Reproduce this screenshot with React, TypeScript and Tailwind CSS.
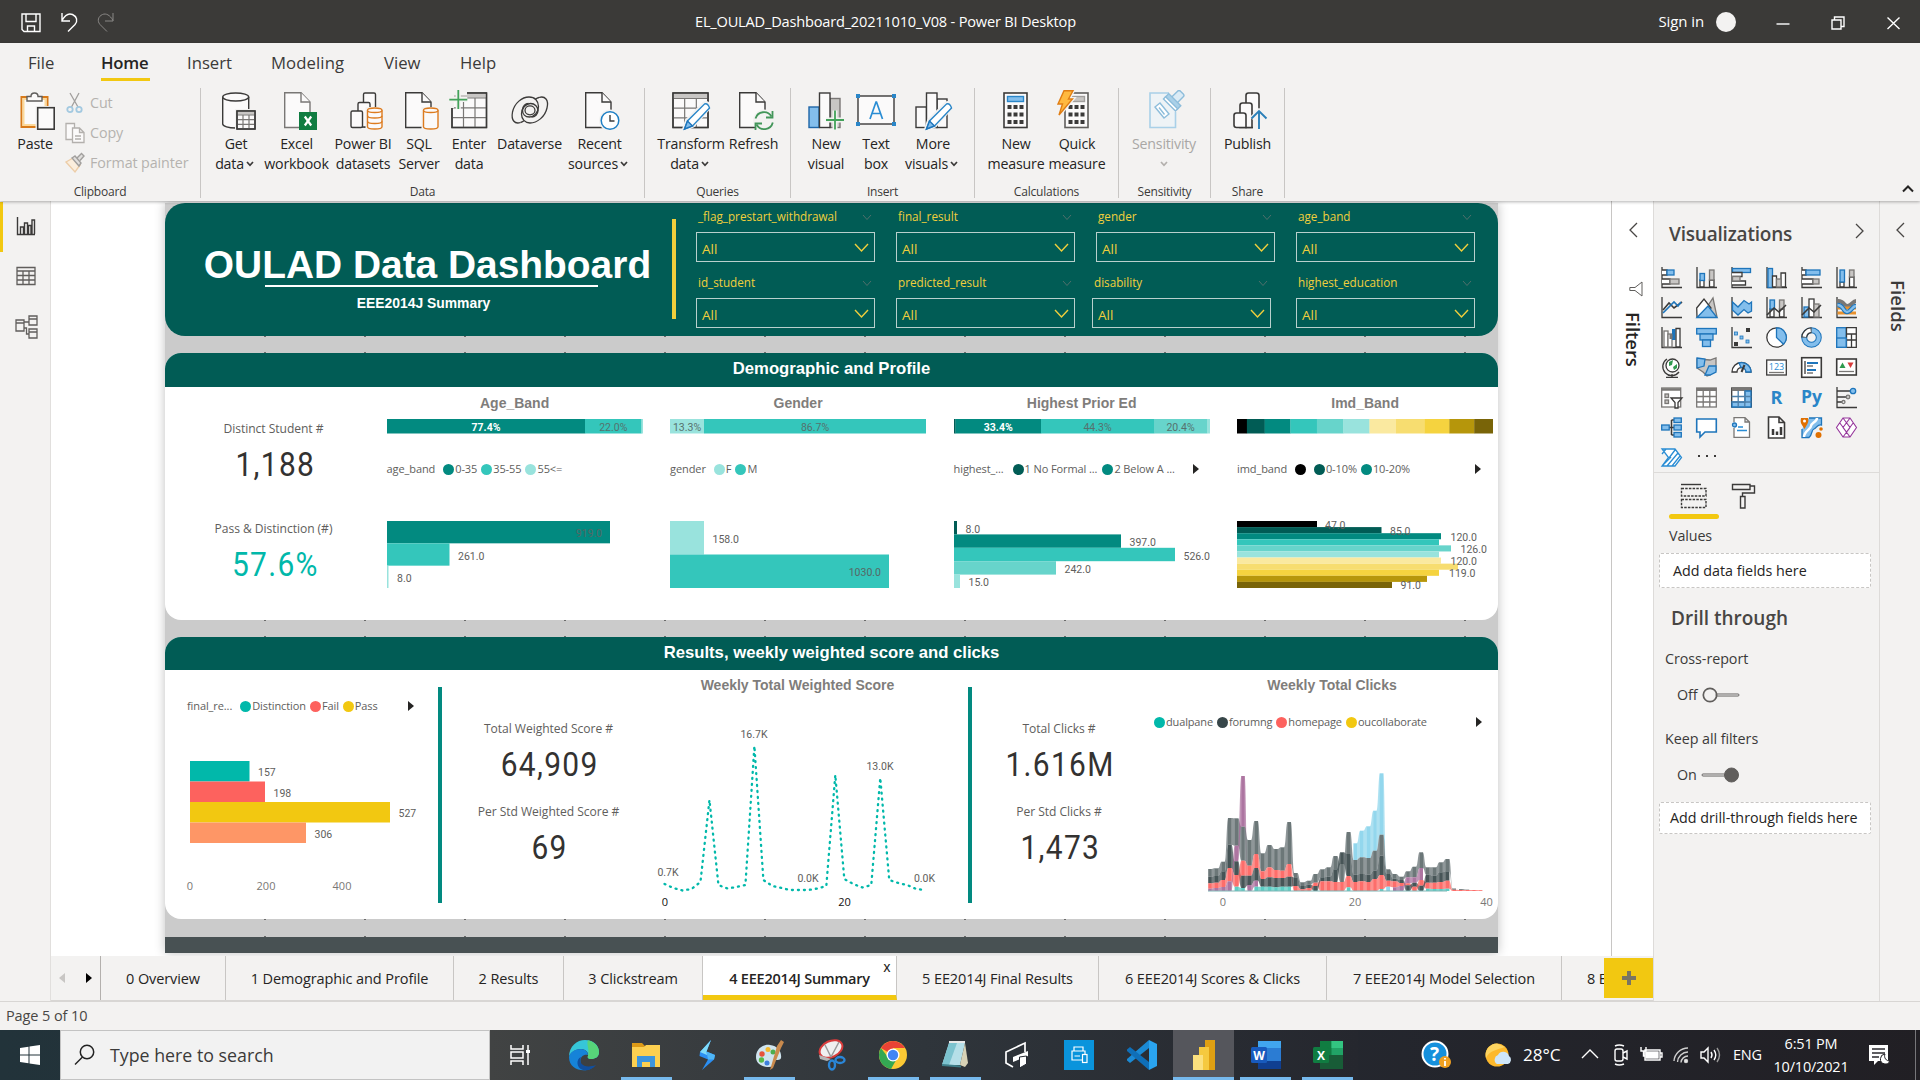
import React from "react";

const DARK = "#3b3a39";
const PAPER = "#fbfafa";

/* ---------- ribbon icons (40 x 42 box) ---------- */

function Icon({ children, w = 40, h = 42 }: { children: React.ReactNode; w?: number; h?: number }) {
  return (
    <svg width={w} height={h} viewBox={`0 0 ${w} ${h}`} fill="none" strokeWidth="1.4" className="block shrink-0">
      {children}
    </svg>
  );
}

function Doc({ x = 6, stroke = DARK }: { x?: number; stroke?: string }) {
  return (
    <g transform={`translate(${x} 0)`} stroke={stroke} fill={PAPER}>
      <path d="M.7 2.7H17L26 12V37.5H.7Z" />
      <path d="M17 2.7V12H26" />
    </g>
  );
}

function Cyl({ x, y, w, h, color, fill = PAPER, rings = 0 }: { x: number; y: number; w: number; h: number; color: string; fill?: string; rings?: number }) {
  const r = w / 2;
  const ry = w / 6.5;
  return (
    <g stroke={color} fill={fill}>
      <path d={`M${x} ${y + ry}v${h - 2 * ry}a${r} ${ry} 0 0 0 ${w} 0v${-(h - 2 * ry)}`} />
      <ellipse cx={x + r} cy={y + ry} rx={r} ry={ry} />
      {Array.from({ length: rings }, (_, i) => (
        <path key={i} fill="none" d={`M${x} ${y + ry + ((i + 1) * (h - 2 * ry)) / (rings + 1)}a${r} ${ry} 0 0 0 ${w} 0`} />
      ))}
    </g>
  );
}

function GridTable({ x, y, w, h, head = 6 }: { x: number; y: number; w: number; h: number; head?: number }) {
  const bh = h - head;
  return (
    <g>
      <rect x={x} y={y} width={w} height={h} fill={PAPER} stroke={DARK} />
      <rect x={x + 0.7} y={y + 0.7} width={w - 1.4} height={head - 1} fill="#c8c6c4" />
      <path
        stroke="#797775"
        strokeWidth="1.2"
        d={`M${x} ${y + head}h${w}M${x} ${y + head + bh / 3}h${w}M${x} ${y + head + (2 * bh) / 3}h${w}M${x + w / 3} ${y + head}v${bh}M${x + (2 * w) / 3} ${y + head}v${bh}`}
      />
      <rect x={x} y={y} width={w} height={h} stroke={DARK} />
    </g>
  );
}

function Pencil() {
  return (
    <g>
      <path d="M14 39.5L17 30.5L34 13.5Q37.500 11.500 40 16.500L23 35.5Z" fill="#fff" stroke="#f3f2f1" strokeWidth="4" />
      <path d="M14.500 39L17.500 31L34.500 14Q38 13 39.500 18L22.500 36Z" fill="#fff" stroke="#2a86c8" />
      <path d="M14.500 39L17.500 31L22.500 36Z" fill="#83beec" stroke="#1e75bb" />
    </g>
  );
}

function Plus({ x, y }: { x: number; y: number }) {
  return (
    <g>
      <path d={`M${x - 9} ${y}h18M${x} ${y - 9.5}v19`} stroke="#f3f2f1" strokeWidth="5" />
      <path d={`M${x - 9} ${y}h18M${x} ${y - 9.5}v19`} stroke="#43a25a" strokeWidth="1.8" />
    </g>
  );
}

function Keys({ x }: { x: number }) {
  return (
    <g fill={DARK}>
      {[15, 22.5, 30].map((yy) => [0, 6, 12].map((xx) => <rect key={`${xx}-${yy}`} x={x + xx} y={yy} width="4" height="4" />))}
    </g>
  );
}

const ICONS: Record<string, React.ReactNode> = {
  paste: (
    <Icon>
      <rect x="2.500" y="7" width="26" height="30" fill="#fff" stroke="#d87a1a" strokeWidth="2" />
      <rect x="4.500" y="9" width="22" height="26" fill={PAPER} stroke="#fcd99a" strokeWidth="2" />
      <path d="M8 11V6.500H12Q12 3 15.500 3T19 6.500H23V11Z" fill={PAPER} stroke="#605e5c" />
      <rect x="16.500" y="16" width="20" height="24" fill="#f3f2f1" />
      <rect x="18.700" y="17.700" width="16.500" height="21.500" fill={PAPER} stroke={DARK} strokeWidth="1.600" />
    </Icon>
  ),
  getdata: (
    <Icon>
      <Cyl x={6.7} y={3} w={26} h={35} color={DARK} />
      <rect x="19" y="19" width="22" height="22" fill="#f3f2f1" />
      <GridTable x={21} y={21} w={18} h={18} head={4} />
    </Icon>
  ),
  excel: (
    <Icon w={42}>
      <Doc x={8} stroke="#797775" />
      <rect x="23" y="22" width="18" height="18" fill="#107c41" />
      <path d="M28.800 26.500L35.200 35.500M35.200 26.500L28.800 35.500" stroke="#fff" strokeWidth="2.200" />
    </Icon>
  ),
  pbi: (
    <Icon>
      <g stroke={DARK} fill={PAPER}>
        <rect x="20.500" y="3" width="12" height="34" rx="1.500" />
        <path d="M27 37V14Q27 12.500 25.500 12.500H16.500Q15 12.500 15 14V37Z" />
        <rect x="8" y="21" width="11.500" height="16.500" rx="1.500" />
      </g>
      <path d="M22.500 17H42V41H22.500Z" fill="#f3f2f1" />
      <Cyl x={24.5} y={18} w={14.5} h={21} color="#dd7b1e" rings={2} />
    </Icon>
  ),
  sql: (
    <Icon>
      <Doc />
      <path d="M22.500 17H42V41H22.500Z" fill="#f3f2f1" />
      <Cyl x={24.5} y={18} w={14.5} h={21} color="#dd7b1e" />
    </Icon>
  ),
  enter: (
    <Icon>
      <GridTable x={3} y={3} w={34.5} h={34.5} head={5} />
      <path d="M0 0H18V5H0ZM0 0H5V18H0Z" fill="#f3f2f1" />
      <Plus x={9.3} y={9.6} />
    </Icon>
  ),
  dataverse: (
    <Icon>
      <g stroke={DARK} strokeWidth="1.300">
        <path d="M29 7.500C35 5.500 39 10 37 18C35 27 27 33 20 33C15 33 11.500 29 11.500 24C11.500 18 16 13.500 20.500 13.500C25 13.500 28 17 28 20.500C28 24.500 25 27 21.500 27" />
        <path d="M10.500 32.500C4.500 34.500 1 30 2.500 22C4.500 13 12 7 19 7C25 7 28.500 11 28.500 16.500C28.500 22.500 24 27 19.500 27C15 27 12.500 24 12.500 20C12.500 16 15.500 13.500 18.500 13.500" />
        <path d="M29 7.500C27 8 26.500 8.500 25.500 9.300M10.500 32.500C12 32.200 13 31.500 14 30.800" />
        <ellipse cx="20" cy="20.300" rx="5" ry="4.500" />
      </g>
    </Icon>
  ),
  recent: (
    <Icon>
      <Doc x={5} />
      <circle cx="30" cy="30.500" r="11" fill="#f3f2f1" />
      <circle cx="30" cy="30.500" r="8.800" fill="#fff" stroke="#1e7fc4" strokeWidth="1.500" />
      <path d="M30 25V31H34.500" stroke={DARK} />
    </Icon>
  ),
  transform: (
    <Icon w={42}>
      <GridTable x={3} y={3} w={35} h={34.5} head={5.5} />
      <Pencil />
    </Icon>
  ),
  refresh: (
    <Icon w={42}>
      <Doc />
      <circle cx="31" cy="30.500" r="11" fill="#f3f2f1" />
      <g stroke="#43965a" strokeWidth="1.800">
        <path d="M22.500 28.500A8.800 8.800 0 0 1 38.500 26.500M39.800 32.500A8.800 8.800 0 0 1 23.500 34.500" />
        <path d="M39.500 21V27.500H33M22.500 40V33.500H29" />
      </g>
    </Icon>
  ),
  newvisual: (
    <Icon w={42}>
      <rect x="4" y="17" width="10" height="20.500" fill="#83beec" stroke="#1e66a8" />
      <rect x="25" y="8.500" width="10" height="29" fill="#c8c6c4" stroke="#797775" />
      <rect x="14.500" y="3" width="10.500" height="34.500" fill={PAPER} stroke={DARK} />
      <Plus x={30} y={30} />
    </Icon>
  ),
  textbox: (
    <Icon>
      <rect x="2" y="6" width="36" height="28" fill={PAPER} stroke={DARK} />
      <path d="M14 29L20 12H20.500L26.500 29M16 23.500H24.500" stroke="#2a8dd4" strokeWidth="1.700" />
      <g fill="#2a86c8">
        <rect x="0" y="4" width="4" height="4" />
        <rect x="36" y="4" width="4" height="4" />
        <rect x="0" y="32" width="4" height="4" />
        <rect x="36" y="32" width="4" height="4" />
      </g>
    </Icon>
  ),
  more: (
    <Icon w={42}>
      <g stroke={DARK} fill={PAPER}>
        <rect x="4" y="17" width="10.500" height="20.500" />
        <rect x="25" y="9" width="10" height="28.500" />
        <rect x="14.500" y="3" width="10.500" height="34.500" />
      </g>
      <Pencil />
    </Icon>
  ),
  measure: (
    <Icon>
      <rect x="8" y="3" width="23" height="34.500" fill={PAPER} stroke={DARK} strokeWidth="1.600" />
      <rect x="11.500" y="6.500" width="16" height="5" fill="#83beec" stroke="#2a86c8" />
      <Keys x={11.5} />
    </Icon>
  ),
  quick: (
    <Icon>
      <rect x="8" y="3" width="23" height="34.500" fill={PAPER} stroke="#605e5c" strokeWidth="1.600" />
      <rect x="12.500" y="6.500" width="15" height="5" fill="#c8c6c4" stroke="#a19f9d" />
      <Keys x={11.5} />
      <path d="M7 .5H16L11.500 9H15.500L2 25L5.500 14H1Z" fill="#ffc95c" stroke="#f3f2f1" strokeWidth="4" />
      <path d="M7 .8H16L11.500 9H15.500L2 25L5.500 14H1Z" fill="#ffb940" stroke="#e07d13" />
    </Icon>
  ),
  sensitivity: (
    <Icon w={42}>
      <path d="M26 3H7V37.500H32.500V22" stroke="#a9d0e8" strokeWidth="1.600" fill="#eef3f6" />
      <g transform="rotate(45 24 16) translate(1 -3)" stroke="#8dbddb">
        <rect x="20" y="-1" width="8" height="12" rx="2" fill="#dbebf5" />
        <rect x="15.500" y="9" width="17" height="5" fill="#a9d0e8" />
        <rect x="15.500" y="13.500" width="17" height="3" fill="#fff" />
      </g>
      <path d="M12 17L17 13L26 24L21 28ZM16 17.500L21.500 24.500" stroke="#8dbddb" fill="#fff" />
    </Icon>
  ),
  publish: (
    <Icon w={42}>
      <g stroke={DARK} fill={PAPER} strokeWidth="1.600">
        <path d="M19 37.500V5.500Q19 3 21.500 3H29.500Q32 3 32 5.500V37.500Z" />
        <path d="M13 37.500V15.500Q13 13 15.500 13H22.500Q25 13 25 15.500V37.500Z" />
        <path d="M7 35V25.500Q7 23 9.500 23H16.500Q19 23 19 25.500V37.500H9.500Q7 37.500 7 35Z" />
      </g>
      <path d="M26 20H42V42H26Z" fill="#f3f2f1" />
      <path d="M32 39V21M24.500 28.500L32 21L39.500 28.500" stroke="#f3f2f1" strokeWidth="4.500" />
      <path d="M32 39V21M24.500 28.500L32 21L39.500 28.500" stroke="#2a7fb8" strokeWidth="1.900" />
    </Icon>
  ),
};

function Caret({ color = DARK }: { color?: string }) {
  return (
    <svg width="8" height="6" viewBox="0 0 8 6" fill="none" className="inline-block">
      <path d="M1 1L4 4.300L7 1" stroke={color} strokeWidth="1.700" />
    </svg>
  );
}

function Btn({ icon, a, b, caret, w, dim }: { icon: string; a: string; b?: string; caret?: boolean; w: string; dim?: boolean }) {
  return (
    <div className={`${w} flex shrink-0 flex-col items-center text-[14.200px] leading-5 tracking-[-0.200px] whitespace-nowrap ${dim ? "text-[#a9a7a5]" : "text-[#252423]"}`}>
      {ICONS[icon]}
      <div className="mt-[2px]">{a}</div>
      <div className={`flex h-5 items-center gap-[2px] ${caret && b ? "-ml-[3px]" : ""}`}>
        {b}
        {caret && <Caret color={dim ? "#b3b0ad" : DARK} />}
      </div>
    </div>
  );
}

function Group({ label, w, pad = "", children }: { label: string; w: string; pad?: string; children: React.ReactNode }) {
  return (
    <div className={`${w} flex h-[110px] shrink-0 flex-col justify-between border-r border-[#c8c6c4] pt-[2px]`}>
      <div className={`flex ${pad}`}>{children}</div>
      <div className="h-[13px] text-center text-[12px] leading-[14px] tracking-[-0.200px] text-[#3b3a39]">{label}</div>
    </div>
  );
}

function TitleBar() {
  return (
    <div className="grid h-[43px] grid-cols-[695px_auto_1fr] items-center bg-[#3b3a38] text-[14.600px] tracking-[-0.200px] text-white">
      <svg width="130" height="43" viewBox="0 0 130 43" fill="none" stroke="#fff" strokeWidth="1.400">
        <path d="M22 14H40V31.500H24L22 29.500ZM26 14V21.500H36V14M27.500 31.500V26H34.500V31.500" />
        <path d="M62 13V21H70M62 20.500C65 15 69 13 72.500 14.500C77 16.500 78 21 75 24.500L68 31.500" />
        <path d="M113 13V21H105M113 20.500C110 15 106 13 102.500 14.500C98 16.500 97 21 100 24.500L107 31.500" stroke="#8a8886" strokeWidth="1" />
      </svg>
      <div>EL_OULAD_Dashboard_20211010_V08 - Power BI Desktop</div>
      <div className="flex h-full items-center justify-end">
        <span className="text-[15px] tracking-[-0.100px]">Sign in</span>
        <span className="ml-[12px] size-5 rounded-full bg-[#f3f2f1]" />
        <svg width="184" height="43" viewBox="0 0 184 43" fill="none" stroke="#fff" strokeWidth="1.400">
          <path d="M40.500 24H53.500" />
          <path d="M96 20H105V29H96ZM98.500 20V17H108V26.500H105" />
          <path d="M151.500 17.500L163.500 29M163.500 17.500L151.500 29" />
        </svg>
      </div>
    </div>
  );
}

function Ribbon() {
  return (
    <div className="relative z-10 h-[158px] bg-[#f3f2f1] shadow-[0_1px_3px_rgba(0,0,0,0.300)]">
      <div className="flex h-[45px] text-[16.700px] leading-[40px] text-[#3b3a39]">
        <div className="w-[101px] pl-[28px]">File</div>
        <div className="h-[38px] w-[49px] border-b-[3px] border-[#f2c811] font-semibold tracking-[-0.200px] text-[#252423]">Home</div>
        <div className="ml-[37px] w-[84px]">Insert</div>
        <div className="w-[113px] tracking-[0.100px]">Modeling</div>
        <div className="w-[76px]">View</div>
        <div>Help</div>
      </div>
      <div className="flex">
        <Group label="Clipboard" w="w-[201px]">
          <div className="flex w-[65px] flex-col items-center pl-[5px] text-[14.300px] leading-5 tracking-[-0.200px] text-[#252423]">
            <div className="ml-[7px]">{ICONS.paste}</div>
            <div className="mt-[2px]">Paste</div>
          </div>
          <div className="flex flex-col text-[14.300px] leading-[30px] tracking-[-0.100px] text-[#b5b2af]">
            <div className="-mt-[2px] flex h-[30px] items-center gap-[5px]">
              <svg width="20" height="24" viewBox="0 0 20 24" fill="none" strokeWidth="1.300">
                <path d="M5 2L13 16M14 2L6.500 16" stroke="#a19f9d" />
                <circle cx="5" cy="18.500" r="2.700" stroke="#a3c9e0" strokeWidth="1.800" />
                <circle cx="14" cy="18.500" r="2.700" stroke="#a3c9e0" strokeWidth="1.800" />
              </svg>
              Cut
            </div>
            <div className="flex h-[30px] items-center gap-[5px]">
              <svg width="20" height="24" viewBox="0 0 20 24" fill={PAPER} stroke="#b3b0ad" strokeWidth="1.300">
                <path d="M8 18.500H1V2.500H9.500V7" />
                <path d="M7.500 7H14.500L19 11.500V21.500H7.500ZM14.500 7V11.500H19M10 15H16M10 18H16" />
              </svg>
              Copy
            </div>
            <div className="flex h-[30px] items-center gap-[5px]">
              <svg width="20" height="24" viewBox="0 0 20 24" fill="none" strokeWidth="1.400">
                <path d="M1 11L8 7L15 14L10 21Z" fill="#fbeedd" stroke="#eccda8" />
                <path d="M7 7L10 5L16 12L14 15ZM12 7L16.500 2.500L19 5L15 9.500" stroke="#a19f9d" fill="#e1dfdd" />
              </svg>
              <span className="whitespace-nowrap">Format painter</span>
            </div>
          </div>
        </Group>
        <Group label="Data" w="w-[444px]" pad="pl-[10px]">
          <Btn icon="getdata" a="Get" b="data" caret w="w-[50px]" />
          <Btn icon="excel" a="Excel" b="workbook" w="w-[71px]" />
          <Btn icon="pbi" a="Power BI" b="datasets" w="w-[62px]" />
          <Btn icon="sql" a="SQL" b="Server" w="w-[50px]" />
          <Btn icon="enter" a="Enter" b="data" w="w-[50px]" />
          <Btn icon="dataverse" a="Dataverse" w="w-[71px]" />
          <Btn icon="recent" a="Recent" b="sources" caret w="w-[69px]" />
        </Group>
        <Group label="Queries" w="w-[146px]" pad="pl-[9px]">
          <Btn icon="transform" a="Transform" b="data" caret w="w-[74px]" />
          <Btn icon="refresh" a="Refresh" w="w-[51px]" />
        </Group>
        <Group label="Insert" w="w-[184px]" pad="pl-[10px]">
          <Btn icon="newvisual" a="New" b="visual" w="w-[50px]" />
          <Btn icon="textbox" a="Text" b="box" w="w-[50px]" />
          <Btn icon="more" a="More" b="visuals" caret w="w-[64px]" />
        </Group>
        <Group label="Calculations" w="w-[144px]" pad="pl-[10px]">
          <Btn icon="measure" a="New" b="measure" w="w-[62px]" />
          <Btn icon="quick" a="Quick" b="measure" w="w-[60px]" />
        </Group>
        <Group label="Sensitivity" w="w-[92px]">
          <Btn icon="sensitivity" a="Sensitivity" caret dim w="w-[90px]" />
        </Group>
        <Group label="Share" w="w-[74px]">
          <Btn icon="publish" a="Publish" w="w-[73px]" />
        </Group>
        <div className="flex grow items-end justify-end pr-[5px] pb-[3px]">
          <svg width="14" height="10" viewBox="0 0 14 10" fill="none" className="mb-[1px]">
            <path d="M2 7.500L7 2.500L12 7.500" stroke="#252423" strokeWidth="2" />
          </svg>
        </div>
      </div>
    </div>
  );
}

/* ---------- left rail ---------- */

function Rail() {
  return (
    <div className="flex w-[51px] shrink-0 flex-col border-r border-[#e1dfdd] bg-[#f3f2f1]">
      <div className="mt-[1px] flex h-[50px] items-center border-l-[3px] border-[#f2c811] pb-[2px] pl-[13px]">
        <svg width="20" height="20" viewBox="0 0 20 20" fill="none" stroke={DARK} strokeWidth="1.400">
          <path d="M1.500 1V18.500H19M4.500 18V11H7.500V18M8.500 18V7H11.500V18M12.500 18V9.500H15V18M16 18V4H18.500V18" />
        </svg>
      </div>
      <div className="flex h-[48px] items-center pl-[16px]">
        <svg width="20" height="20" viewBox="0 0 20 20" fill="none" stroke="#605e5c" strokeWidth="1.300">
          <path d="M1 1.500H19V18.500H1ZM1 5H19M1 9.500H19M1 14H19M7 5V18.500M13 5V18.500" />
        </svg>
      </div>
      <div className="flex h-[54px] items-center pl-[15px]">
        <svg width="24" height="24" viewBox="0 0 24 24" fill="none" stroke="#605e5c" strokeWidth="1.300">
          <path d="M1 5H9V16H1ZM1 8H9M14 1H22V10H14ZM14 4H22M14 14H22V23H14ZM14 17H22M9 7H14M9 13H11.500V19H14" />
        </svg>
      </div>
    </div>
  );
}

/* ---------- report canvas ---------- */

function Ticks() {
  return (
    <div className="grid h-px grid-cols-[repeat(13,100px)]">
      {Array.from({ length: 13 }, (_, i) => (
        <div key={i} className="h-full translate-x-px border-r-2 border-[#6b6b6b]" />
      ))}
    </div>
  );
}

function Gap({ h }: { h: string }) {
  return (
    <div className={`${h} flex flex-col justify-between`}>
      <Ticks />
      <Ticks />
    </div>
  );
}

function Slicer({ label, shift }: { label: string; shift?: boolean }) {
  return (
    <div className={shift ? "w-[179px] -translate-x-[4px]" : "w-[179px]"}>
      <div className="flex h-[24px] items-center justify-between pr-[3px] pl-[2px] text-[11.700px] text-[#f0cf3c]">
        <span>{label}</span>
        <svg width="10" height="7" viewBox="0 0 10 7" fill="none">
          <path d="M1 1L5 5.500L9 1" stroke="#50706c" />
        </svg>
      </div>
      <div className="mt-[3px] flex h-[30px] items-center justify-between border border-[#b9d0cd] pt-[4px] pr-[5px] pl-[5px] text-[13.500px] text-[#f0cf3c]">
        <span>All</span>
        <svg width="15" height="10" viewBox="0 0 15 10" fill="none" className="-mt-[3px]">
          <path d="M1 1L7.500 8L14 1" stroke="#f0cf3c" strokeWidth="1.400" />
        </svg>
      </div>
    </div>
  );
}

function ReportHeader() {
  return (
    <div className="flex h-[133px] rounded-[20px] bg-[#015c55]">
      <div className="flex w-[507px] flex-col items-center pl-[18px] font-['Liberation_Sans',Arial,sans-serif] font-bold text-white">
        <div className="mt-[40px] h-[42px] text-[38.900px] leading-[44px] whitespace-nowrap">OULAD Data Dashboard</div>
        <div className="ml-[8px] h-[2px] w-[333px] bg-white" />
        <div className="mt-[7px] mr-[8px] text-[13.900px] leading-[18px]">EEE2014J Summary</div>
      </div>
      <div className="mt-[16px] h-[100px] w-[4px] bg-[#f0cf3c]" />
      <div className="ml-[20px] grid grid-cols-[repeat(4,179px)] content-start gap-x-[21px] gap-y-[9px] pt-[2px]">
        <Slicer label="_flag_prestart_withdrawal" />
        <Slicer label="final_result" />
        <Slicer label="gender" />
        <Slicer label="age_band" />
        <Slicer label="id_student" />
        <Slicer label="predicted_result" />
        <Slicer label="disability" shift />
        <Slicer label="highest_education" />
      </div>
    </div>
  );
}

function SectionTitle({ children, h }: { children: React.ReactNode; h: string }) {
  return (
    <div className={`${h} rounded-t-[16px] bg-[#015c55] text-center font-['Liberation_Sans',Arial,sans-serif] text-[16.700px] leading-[32px] font-bold text-white`}>
      {children}
    </div>
  );
}

function ChartTitle({ children }: { children: React.ReactNode }) {
  return <div className="text-center font-['Liberation_Sans',Arial,sans-serif] text-[14px] leading-[20px] font-bold text-[#7f7d7b]">{children}</div>;
}

type Item = { c?: string; t: string };

function Legend({
  name,
  items,
  more,
  spacing = "gap-[4px] tracking-[-0.100px]",
  end = "mr-[12px]",
}: {
  name?: string;
  items: Item[];
  more?: boolean;
  spacing?: string;
  end?: string;
}) {
  return (
    <div className={`flex h-[18px] items-center text-[11px] whitespace-nowrap text-[#605e5c] ${spacing}`}>
      {name && <span className="mr-[4px]">{name}</span>}
      {items.map((it, i) => (
        <span key={i} className="flex items-center gap-[1px]">
          <svg width="11" height="11" viewBox="0 0 11 11">
            <circle cx="5.500" cy="5.500" r="5.500" fill={it.c} />
          </svg>
          {it.t}
        </span>
      ))}
      {more && (
        <svg width="6" height="10" viewBox="0 0 6 10" className={`${end} ml-auto`}>
          <path d="M0 0L6 5L0 10Z" fill="#252423" />
        </svg>
      )}
    </div>
  );
}

type Seg = { w: number; c: string; t?: string; light?: boolean };

function StackBar({ segs }: { segs: Seg[] }) {
  let x = 0;
  return (
    <svg width="256" height="15" viewBox="0 0 256 15" className="block font-[Roboto,sans-serif] text-[10.500px]">
      {segs.map((s, i) => {
        const at = x;
        x += s.w;
        return (
          <g key={i}>
            <rect x={at} y="0" width={s.w + 0.2} height="14.500" fill={s.c} />
            {s.t && (
              <text x={at + s.w / 2} y="12" textAnchor="middle" fill={s.light ? "#fff" : "#56716e"} fontWeight={s.light ? 700 : 400}>
                {s.t}
              </text>
            )}
          </g>
        );
      })}
    </svg>
  );
}

type Bar = { w: number; c: string; t?: string; tx?: number; ty?: number; inside?: boolean };

function Bars({ bars, height = 67, width = 256 }: { bars: Bar[]; height?: number; width?: number }) {
  const rh = height / bars.length;
  return (
    <svg width={width} height={height + 6} viewBox={`0 0 ${width} ${height + 6}`} className="block overflow-visible font-[Roboto,sans-serif] text-[10.500px]">
      {bars.map((b, i) => (
        <rect key={i} x="0" y={i * rh} width={b.w} height={rh} fill={b.c} />
      ))}
      {bars.map(
        (b, i) =>
          b.t && (
            <text
              key={i}
              x={b.tx ?? (b.inside ? b.w - 8 : b.w + 8.5)}
              y={b.ty ?? i * rh + rh / 2 + 5}
              textAnchor={b.inside ? "end" : "start"}
              fill={b.inside ? "#566765" : "#605e5c"}
            >
              {b.t}
            </text>
          ),
      )}
    </svg>
  );
}

function Card({ label, value, teal, h }: { label: string; value: string; teal?: boolean; h: string }) {
  return (
    <div className={`${h} flex flex-col items-center`}>
      <div className="text-[12.100px] leading-[18px] tracking-[-0.050px] text-[#605e5c]">{label}</div>
      <div className={`mt-[6px] ml-[3px] scale-x-[0.880] font-[Roboto,sans-serif] text-[34px] leading-[40px] tracking-[1.500px] ${teal ? "text-[#01b8aa]" : "text-[#333231]"}`}>{value}</div>
    </div>
  );
}

const C1 = "#015c55";
const C2 = "#028a80";
const C3 = "#34c6bb";
const C4 = "#67d4cb";
const C5 = "#99e3dd";
const IMD = ["#000000", C1, C2, C3, C4, C5, "#fae9a0", "#f7dd70", "#f5d33f", "#b6960b", "#796408"];
const IMD_W = [9.9, 17.8, 25.7, 26.5, 26.5, 26.1, 26.5, 28.4, 24.9, 24.9, 18.8];
const IMD_BARS = [80, 144.5, 204, 202, 214, 202, 204, 221, 202, 190, 155];
const IMD_LABELS: Record<number, [string, number]> = {
  0: ["47.0", 88],
  1: ["85.0", 153],
  2: ["120.0", 213.5],
  4: ["126.0", 223.5],
  6: ["120.0", 213.5],
  8: ["119.0", 212],
  10: ["91.0", 163.5],
};

function Profile({ title, segs, legend, bars }: { title: string; segs: Seg[]; legend: React.ReactNode; bars: Bar[] }) {
  return (
    <div className="w-[256px] pt-[6px]">
      <ChartTitle>{title}</ChartTitle>
      <div className="mt-[6px]">
        <StackBar segs={segs} />
      </div>
      <div className="mt-[26px]">{legend}</div>
      <div className="mt-[43px]">
        <Bars bars={bars} />
      </div>
    </div>
  );
}

function Demographics() {
  return (
    <div className="h-[267px] rounded-[16px] bg-white">
      <SectionTitle h="h-[34px]">Demographic and Profile</SectionTitle>
      <div className="flex">
        <div className="w-[222px] pt-[33px] pr-[5px]">
          <Card h="h-[100px]" label="Distinct Student #" value="1,188" />
          <Card h="h-[100px]" label="Pass & Distinction (#)" value="57.6%" teal />
        </div>
        <div className="-ml-[0.400px] flex gap-[27.500px]">
          <Profile
            title="Age_Band"
            segs={[
              { w: 198, c: C2, t: "77.4%", light: true },
              { w: 56.5, c: C3, t: "22.0%" },
              { w: 1.5, c: C5 },
            ]}
            legend={<Legend name="age_band" items={[{ c: C2, t: "0-35" }, { c: C3, t: "35-55" }, { c: C5, t: "55<=" }]} />}
            bars={[
              { w: 223, c: C2, t: "919.0", inside: true },
              { w: 62.5, c: C3, t: "261.0" },
              { w: 1.5, c: C5, t: "8.0" },
            ]}
          />
          <Profile
            title="Gender"
            segs={[
              { w: 34, c: C5, t: "13.3%" },
              { w: 222, c: C3, t: "86.7%" },
            ]}
            legend={<Legend name="gender" items={[{ c: C5, t: "F" }, { c: C3, t: "M" }]} />}
            bars={[
              { w: 34, c: C5, t: "158.0" },
              { w: 219, c: C3, t: "1030.0", inside: true },
            ]}
          />
          <Profile
            title="Highest Prior Ed"
            segs={[
              { w: 1.5, c: C1 },
              { w: 85.5, c: C2, t: "33.4%", light: true },
              { w: 113, c: C3, t: "44.3%" },
              { w: 53, c: C4, t: "20.4%" },
              { w: 3, c: C5 },
            ]}
            legend={<Legend name="highest_..." items={[{ c: C1, t: "1 No Formal ..." }, { c: C2, t: "2 Below A ..." }]} more end="mr-[11px]" spacing="gap-[5px] tracking-[-0.100px]" />}
            bars={[
              { w: 3, c: C1, t: "8.0" },
              { w: 167, c: C2, t: "397.0" },
              { w: 221, c: C3, t: "526.0" },
              { w: 102, c: C4, t: "242.0" },
              { w: 6, c: C5, t: "15.0" },
            ]}
          />
          <Profile
            title="Imd_Band"
            segs={IMD.map((c, i) => ({ c, w: IMD_W[i] }))}
            legend={<Legend name="imd_band" items={[{ c: "#000", t: "\u00a0" }, { c: C1, t: "0-10%" }, { c: C2, t: "10-20%" }]} more />}
            bars={IMD.map((c, i) => ({
              c,
              w: IMD_BARS[i],
              t: IMD_LABELS[i]?.[0],
              tx: IMD_LABELS[i]?.[1],
              ty: i * 6.09 + 7.5,
            }))}
          />
        </div>
      </div>
    </div>
  );
}

/* weekly weighted score, y in chart pixels for weeks 0..29 */
const SCORE = [154, 158, 160.5, 159, 152, 70, 155, 158.5, 157, 155, 16, 150, 156, 158, 160, 160, 160, 158.5, 156, 45, 149, 154, 157.5, 155, 48, 150, 153, 155, 159, 160];

function ScoreChart() {
  return (
    <svg width="300" height="190" viewBox="0 0 300 190" className="block overflow-visible" textAnchor="middle">
      <polyline
        points={SCORE.map((y, i) => `${14.5 + i * 8.99},${y}`).join(" ")}
        fill="none"
        stroke="#01b8aa"
        strokeWidth="2.300"
        strokeDasharray="1 5"
        strokeLinecap="round"
        strokeLinejoin="round"
      />
      <g className="font-[Roboto,sans-serif] text-[10.500px]" fill="#605e5c">
        <text x="18" y="146">0.7K</text>
        <text x="104" y="8">16.7K</text>
        <text x="158" y="152">0.0K</text>
        <text x="230" y="40">13.0K</text>
        <text x="274.500" y="152">0.0K</text>
      </g>
      <g className="text-[11px]" fill="#111">
        <text x="15" y="176">0</text>
        <text x="194.500" y="176">20</text>
      </g>
    </svg>
  );
}

const RC: Record<string, string> = { g: "#5f6b6d", d: "#374649", r: "#fd625e", p: "#a66999", t: "#4fc9bf", b: "#8ad4eb" };

/* each week lists its segments from the top: series key followed by its height above the axis */
const WEEKS: string[] = [
  "g22 d14.300 r7.700 p2.300", "g22.700 d15 r8.300 p3", "g29.300 d19.700 r11 p4", "g73 d46.300 r23 p9.700",
  "g72.700 p45.300 d29.700 r16 t4.300", "p115 g64.300 r30.300 d15.300 t3", "g51 r25.300 d15.300 p6", "g70 r37 d23 p10.300 t4.300",
  "g37.700 r19.700 d12 t4.300", "g46 r23.700 d13.700 t4.300", "g42 r21 d13 t3.700", "g43.700 r20.300 d13 t4.300",
  "g69 r27 d14.300 t4.300", "g18 d13.700 r5", "g8.700 d5 r1.700", "g10.300 d6.300 r3", "g17 r8.300 d5", "g21.700 d13.700 r9.700",
  "g23.700 d14.300 r9.700", "g35 d21.700 r9", "d38.700 g27 r9", "g59 d37 r15 t3.700", "b47.700 g31 d16.300 r9", "b60.300 g33.700 d17 r9.700",
  "b64.700 g33 d16.300 r9", "b80.300 g40.300 d20.300 r12", "b117.700 g56.300 d35.300 r16 t2", "g21.700 d17 r10.300 b4.300",
  "g17 d12.300 r9.700 p3.700", "g14.300 d11 r8 p5", "g19.700 p13.700 r7.700 d5.700", "g24.300 p13.700 d8.300 r4.300",
  "g38.700 p23 r11 d5.300", "g23.700 d16.300 r8.300 t2.300", "g23.700 d15.300 r8.300 t2", "g28.700 d18.700 r9 t2", "g32 d19.700 r10.300 t2.300",
  "g2.500 r1.200", "d1.700 r1", "d1.300 r1", "r1", "r.800",
];

function parseWeek(s: string) {
  const parts = s.split(" ").map((p) => ({ k: p[0], top: Number(p.slice(1)) }));
  return parts.map((p, i) => ({ ...p, bottom: parts[i + 1]?.top ?? 0 }));
}

function ClicksChart() {
  const base = 131;
  const step = 6.6;
  const x0 = 3;
  const data = WEEKS.map(parseWeek);
  return (
    <svg width="290" height="155" viewBox="0 0 290 155" className="block overflow-visible" textAnchor="middle">
      {data.slice(0, -1).map((wk, i) =>
        wk.map((s, j) => {
          const n = data[i + 1].find((o) => o.k === s.k);
          if (!n) return null;
          const xa = x0 + i * step + 1.6;
          const xb = x0 + (i + 1) * step - 1.6;
          const m = (xa + xb) / 2;
          return (
            <path
              key={`${i}-${j}`}
              opacity="0.700"
              fill={RC[s.k]}
              d={`M${xa} ${base - s.top}C${m} ${base - s.top} ${m} ${base - n.top} ${xb} ${base - n.top}V${base - n.bottom}C${m} ${base - n.bottom} ${m} ${base - s.bottom} ${xa} ${base - s.bottom}Z`}
            />
          );
        }),
      )}
      {data.map((wk, i) =>
        wk.map((s, j) => (
          <rect key={`${i}-${j}`} x={x0 + i * step - 1.8} y={base - s.top} width="3.600" height={s.top - s.bottom} fill={RC[s.k]} opacity="0.920" />
        )),
      )}
      <path d="M1 131H240" stroke="#7fb5b5" strokeWidth="1" />
      <g className="text-[11px]" fill="#7a7876">
        <text x="16" y="146">0</text>
        <text x="148" y="146">20</text>
        <text x="279.500" y="146">40</text>
      </g>
    </svg>
  );
}

function Results() {
  return (
    <div className="h-[282px] rounded-[16px] bg-white">
      <SectionTitle h="h-[33px]">Results, weekly weighted score and clicks</SectionTitle>
      <div className="flex">
        <div className="w-[273px] pt-[27px] pl-[22px]">
          <Legend name="final_re..." items={[{ c: "#01b8aa", t: "Distinction" }, { c: "#fd625e", t: "Fail" }, { c: "#f2c811", t: "Pass" }]} more end="mr-[24px]" />
          <div className="mt-[46px] pl-[3px]">
            <Bars
              height={82}
              width={240}
              bars={[
                { w: 59.5, c: "#01b8aa", t: "157" },
                { w: 75, c: "#fd625e", t: "198" },
                { w: 200, c: "#f2c811", t: "527" },
                { w: 116, c: "#fe9666", t: "306" },
              ]}
            />
          </div>
          <svg width="200" height="20" viewBox="0 0 200 20" textAnchor="middle" className="mt-[28px] block overflow-visible text-[11px]" fill="#7a7876">
            <text x="3" y="13">0</text>
            <text x="79" y="13">200</text>
            <text x="155" y="13">400</text>
          </svg>
        </div>
        <div className="mt-[17px] h-[216px] w-[4px] bg-[#028a80]" />
        <div className="w-[208px] pt-[50px] pl-[5px]">
          <Card h="h-[83px]" label="Total Weighted Score #" value="64,909" />
          <Card h="h-[83px]" label="Per Std Weighted Score #" value="69" />
        </div>
        <div className="w-[318px] pt-[5px]">
          <div className="pr-[23px]">
            <ChartTitle>Weekly Total Weighted Score</ChartTitle>
          </div>
          <div className="mt-[35px]">
            <ScoreChart />
          </div>
        </div>
        <div className="mt-[17px] h-[216px] w-[4px] bg-[#028a80]" />
        <div className="w-[174px] pt-[50px]">
          <Card h="h-[83px]" label="Total Clicks #" value="1.616M" />
          <Card h="h-[83px]" label="Per Std Clicks #" value="1,473" />
        </div>
        <div className="w-[350px] pt-[5px] pl-[8px]">
          <div className="pl-[14px]">
            <ChartTitle>Weekly Total Clicks</ChartTitle>
          </div>
          <div className="mt-[18px]">
            <Legend
              items={[{ c: "#01b8aa", t: "dualpane" }, { c: "#374649", t: "forumng" }, { c: "#fd625e", t: "homepage" }, { c: "#f2c811", t: "oucollaborate" }]}
              more
              end="mr-[14px]"
              spacing="gap-[4px] tracking-[-0.150px]"
            />
          </div>
          <div className="mt-[29px] ml-[53px]">
            <ClicksChart />
          </div>
        </div>
      </div>
    </div>
  );
}

function Report() {
  return (
    <div className="h-[750px] w-[1333px] bg-[#cbcbcb] shadow-[0_0_10px_rgba(0,0,0,0.250)]">
      <ReportHeader />
      <Gap h="h-[17px]" />
      <Demographics />
      <Gap h="h-[17px]" />
      <Results />
      <Gap h="h-[18px]" />
      <div className="h-[16px] bg-[#485153]" />
    </div>
  );
}

function Tab({ children, w, active }: { children: React.ReactNode; w: string; active?: boolean }) {
  return (
    <div className={`${w} relative shrink-0 overflow-hidden border-r border-[#c8c6c4] text-center leading-[46px] whitespace-nowrap ${active ? "border-b-[5px] border-b-[#f2c811] bg-white font-semibold tracking-[-0.250px]" : ""}`}>
      {children}
      {active && <span className="absolute top-[5px] right-[6px] text-[11px] leading-[14px]">X</span>}
    </div>
  );
}

function PageTabs() {
  return (
    <div className="flex h-[45px] w-[1602px] overflow-hidden border-b border-[#d8d6d4] bg-[#f3f2f1] text-[14.500px] tracking-[-0.100px] text-[#252423]">
      <div className="flex w-[50px] shrink-0 items-center justify-between border-r border-[#b3b0ad] pr-[8px] pl-[8px]">
        <svg width="6" height="10" viewBox="0 0 6 10">
          <path d="M6 0L0 5L6 10Z" fill="#c8c6c4" />
        </svg>
        <svg width="6" height="10" viewBox="0 0 6 10">
          <path d="M0 0L6 5L0 10Z" fill="#000" />
        </svg>
      </div>
      <Tab w="w-[125px]">0 Overview</Tab>
      <Tab w="w-[228px]">1 Demographic and Profile</Tab>
      <Tab w="w-[110px]">2 Results</Tab>
      <Tab w="w-[139px]">3 Clickstream</Tab>
      <Tab w="w-[194px]" active>4 EEE2014J Summary</Tab>
      <Tab w="w-[202px]">5 EE2014J Final Results</Tab>
      <Tab w="w-[228px]">6 EEE2014J Scores &amp; Clicks</Tab>
      <Tab w="w-[235px]">7 EEE2014J Model Selection</Tab>
      <div className="w-[42px] shrink-0 overflow-hidden pl-[25px] leading-[46px] whitespace-nowrap">8 E</div>
      <div className="mt-[2px] flex h-[40px] w-[49px] shrink-0 items-center justify-center bg-[#f2c811]">
        <svg width="14" height="14" viewBox="0 0 14 14">
          <path d="M7 0V14M0 7H14" stroke="#7a7562" strokeWidth="4" />
        </svg>
      </div>
    </div>
  );
}

/* ---------- visualizations pane ---------- */

const B = "#1e75bb";
const F = "#83beec";
const G = "#c8c6c4";
const S = "#797775";
const AX = <path d="M1 0V20.500H21" stroke={DARK} />;

const VIZ: React.ReactNode[] = [
  <>{AX}<path d="M1 3H6V8H1M1 12H9V17H1" fill="#fff" stroke={DARK} /><rect x="6" y="3" width="7" height="5" fill={F} stroke={B} /><rect x="9" y="12" width="9" height="5" fill={G} stroke={S} /></>,
  <>{AX}<path d="M4 13H8V20H4ZM13.500 13H18V20H13.500Z" fill="#fff" stroke={DARK} /><rect x="4" y="6.500" width="4.500" height="7" fill={F} stroke={B} /><rect x="13.500" y="3" width="4.500" height="10" fill={G} stroke={S} /></>,
  <>{AX}<rect x="1.500" y="1.500" width="18" height="4" fill={F} stroke={B} /><path d="M1 5.500H11V9.500H1M1 14H14.500V18H1" fill="#fff" stroke={DARK} /><rect x="1.500" y="9.500" width="7.500" height="4.500" fill={G} stroke={S} /></>,
  <>{AX}<rect x="2" y="1.500" width="4.500" height="19" fill={F} stroke={B} /><path d="M6.500 9H10.500V20H6.500ZM15 6H19.500V20H15Z" fill="#fff" stroke={DARK} /><rect x="10.500" y="12" width="4.500" height="8" fill={G} stroke={S} /></>,
  <>{AX}<path d="M1 3H5V8H1M1 12H12V17H1" fill="#fff" stroke={DARK} /><rect x="5" y="3" width="14" height="5" fill={F} stroke={B} /><rect x="12" y="12" width="6" height="5" fill={G} stroke={S} /></>,
  <>{AX}<path d="M4 15H8V20H4ZM13.500 10H18V20H13.500Z" fill="#fff" stroke={DARK} /><rect x="4" y="3" width="4.500" height="12" fill={F} stroke={B} /><rect x="13.500" y="3" width="4.500" height="7" fill={G} stroke={S} /></>,

  <>{AX}<path d="M2 13L8 6L13 11L21 5" stroke={DARK} strokeWidth="1.600" /><path d="M2 16L13 5L17 9L20 5" stroke={B} strokeWidth="1.600" /></>,
  <><path d="M9 13L17 1L21 20H9Z" fill={G} stroke={S} /><path d="M.7 11L8 2L15 11L8 20H1Z" fill="#fff" stroke={DARK} /><path d="M1 20.500L12 9L21 20.500Z" fill={F} stroke={B} /></>,
  <>{AX}<path d="M1.500 5L7 10L13 3.500L18 7L20.500 5V14L17 16L13 12.500L7 18L1.500 13Z" fill={F} stroke={B} /></>,
  <>{AX}<path d="M4 12H8V20H4ZM13.500 12H18V20H13.500Z" fill="#fff" stroke={DARK} /><rect x="4" y="3" width="4.500" height="9" fill={F} stroke={B} /><rect x="13.500" y="3" width="4.500" height="9" fill={G} stroke={S} /><path d="M1 18L8 11L13 15L20 8" stroke={DARK} strokeWidth="1.600" /></>,
  <>{AX}<rect x="3" y="10" width="5" height="10" fill={F} stroke={B} /><rect x="8" y="2" width="5" height="18" fill="#fff" stroke={DARK} /><rect x="13" y="7" width="5" height="13" fill={G} stroke={S} /><path d="M1 18L8 11L13 15L20 8" stroke={DARK} strokeWidth="1.600" /></>,
  <>{AX}<path d="M1.500 4C8 3 8 10 12 9S17 4 20 4" stroke={S} strokeWidth="4" /><path d="M1.500 11H20M1.500 16H20" stroke="#e8912e" strokeWidth="3" /><path d="M1.500 8C8 8 7 15 11 15S16 9 20 9" stroke={B} strokeWidth="4.500" /><path d="M1.500 8C8 8 7 15 11 15S16 9 20 9" stroke={F} strokeWidth="2.300" /></>,

  <>{AX}<rect x="3" y="4" width="4" height="16" fill="#fff" stroke={S} /><rect x="7" y="7" width="4" height="13" fill="#fff" stroke={S} /><rect x="11" y="2" width="3.500" height="11" fill={B} /><rect x="8.500" y="7" width="3" height="5" fill={S} /><path d="M15 1.500H19V20H15Z" fill="#fff" stroke={DARK} /></>,
  <g fill={F} stroke={B}><rect x=".7" y="1.500" width="19.600" height="5.500" /><rect x="4" y="7" width="13" height="6" /><rect x="6.500" y="13" width="8" height="6.500" /></g>,
  <>{AX}<rect x="15" y="1" width="4" height="4" fill={DARK} /><rect x="3" y="15" width="4" height="4" fill={DARK} /><g fill={F} stroke={B} strokeWidth=".8"><rect x="3.500" y="5" width="3" height="3" /><rect x="9" y="9" width="3" height="3" /><rect x="15" y="13" width="3" height="3" /></g></>,
  <><circle cx="10.500" cy="10.500" r="9.700" fill="#fff" stroke={DARK} /><path d="M10.500 .8A9.700 9.700 0 0 1 17.500 17.300L10.500 10.500Z" fill={F} stroke={B} /></>,
  <><circle cx="10.500" cy="10.500" r="7.300" stroke={B} strokeWidth="6" /><circle cx="10.500" cy="10.500" r="7.300" stroke={F} strokeWidth="4" /><path d="M3.200 10.500A7.300 7.300 0 0 1 10.500 3.200" stroke={DARK} strokeWidth="6" /><path d="M3.300 9.700A7.300 7.300 0 0 1 9.700 3.300" stroke="#fff" strokeWidth="3.500" /></>,
  <><rect x=".7" y=".7" width="9.500" height="19.600" fill={F} stroke={B} /><path d="M10.500 .7H20.300V20.300H10.500ZM10.500 7H20.300M15.500 7V20M10.500 13H20.300" fill="#fff" stroke={DARK} /><rect x=".7" y="11" width="9.500" height="9.300" fill={F} stroke={B} /></>,

  <><circle cx="11.500" cy="8.500" r="6.500" fill="#fff" stroke={DARK} /><path d="M8 5L12 3L11 8L8 9ZM12 10L16 7L16 11L13 13Z" fill="#2f9a4e" /><path d="M6 2A9 9 0 1 0 18 15M11 17V20M5 20.300H17" stroke={DARK} /></>,
  <><path d="M1 2L8 2.500L14 3L20 1V13L14 18L11 19L7 15L1 11Z" fill={G} stroke={S} /><path d="M1 1L9 2L8 9L1 11ZM13 9L20 9V15L14 18H9Z" fill={F} stroke={B} /></>,
  <><path d="M1 15A9.500 9.500 0 0 1 20 15H15A4.500 4.500 0 0 0 6 15Z" fill="#fff" stroke={DARK} /><path d="M8 6A9.500 9.500 0 0 1 20 15H15A4.500 4.500 0 0 0 10 10.500Z" fill={F} stroke={B} /><path d="M10.500 15L13.500 8" stroke={DARK} strokeWidth="2" /></>,
  <><rect x=".7" y="3" width="19.600" height="15" fill="#fff" stroke={DARK} /><text x="10.500" y="13" fontSize="9" textAnchor="middle" fill="#2a8dd4">123</text><path d="M3 15.500H18" stroke={S} /></>,
  <><rect x=".7" y=".7" width="19.600" height="19.600" fill="#fff" stroke={DARK} strokeWidth="1.600" /><path d="M4 4V17" stroke={DARK} /><path d="M6 6H17M6 13H15" stroke={B} strokeWidth="2" /><path d="M6 9H12M6 16H12" stroke={S} /></>,
  <><rect x=".7" y="2" width="19.600" height="16" fill="#fff" stroke={DARK} strokeWidth="1.600" /><path d="M3.500 11L6.500 5.500L9.500 11Z" fill="#2f9a4e" /><path d="M11.500 5.500H17.500L14.500 11Z" fill="#d83b3b" /><path d="M3 14.500H18" stroke={S} /></>,

  <><rect x=".7" y="1" width="19" height="19" fill="#fff" stroke={S} /><path d="M.7 2.500H20" stroke={S} strokeWidth="2.500" /><rect x="4" y="7" width="3.500" height="3.500" fill={G} stroke={S} /><rect x="4" y="13" width="3.500" height="3.500" fill={G} stroke={S} /><path d="M10 11H21L17 15.500V21H14V15.500Z" fill="#fff" stroke={DARK} /></>,
  <><rect x=".7" y="1" width="19.600" height="19" fill="#fff" stroke={S} /><path d="M.7 2.500H20.300" stroke={S} strokeWidth="3" /><path d="M7.200 4V20M13.800 4V20M.7 9.500H20.300M.7 15H20.300" stroke={S} /></>,
  <><rect x=".7" y="1" width="19.600" height="19" fill="#fff" stroke={DARK} /><path d="M.7 2.500H20.300" stroke={S} strokeWidth="3" /><path d="M14 4H20V20H1V15H14Z" fill={F} stroke={B} /><path d="M7.200 4V20M13.800 4V20M.7 9.500H20.300M.7 15H20.300" stroke="#4d7fa8" /></>,
  <text x="4.500" y="17" fontSize="18" fontWeight="700" fill="#2a86c8">R</text>,
  <text x="0" y="16" fontSize="18" fontWeight="700" fill="#2a86c8" textLength="21" lengthAdjust="spacingAndGlyphs">Py</text>,
  <>{AX}<path d="M1 4H14M1 10H11M1 15H6" stroke={DARK} /><circle cx="17" cy="4" r="2.700" fill={F} stroke={B} /><circle cx="12" cy="10" r="1.800" fill={G} stroke={S} /><circle cx="7.500" cy="15" r="1.500" fill="#fff" stroke={S} /></>,

  <><path d="M7 10.500H13M10.500 3V18M10.500 3H13M10.500 18H13" stroke={DARK} strokeWidth="1.500" /><g fill={F} stroke={B}><rect x=".7" y="8" width="7.500" height="5" /><rect x="13" y="1" width="7.300" height="4.500" /><rect x="13" y="8" width="7.300" height="5" /><rect x="13" y="15.500" width="7.300" height="4.500" /></g></>,
  <path d="M.7 2H20.300V15H9L4 20V15H.7Z" fill="#fff" stroke={B} strokeWidth="1.600" />,
  <><path d="M3 5V.7H14L18.500 5V20.300H3V11M14 .7V5H18.500" fill="#fff" stroke={S} /><circle cx="3.500" cy="8" r="2" fill={F} stroke={B} /><path d="M7 10H12M6 13.500H16" stroke="#2a8dd4" /></>,
  <><path d="M2.500 0H13L18.500 5.500V21H2.500ZM13 0V5.500H18.500" fill="#fff" stroke={DARK} strokeWidth="1.600" /><path d="M7 12V18M11 14.500V18M15 10V18" stroke={DARK} strokeWidth="2.500" /></>,
  <><path d="M8 1H20.500V8C16 7 16 11 13 12S12 17 8 20.500H1V12" fill={F} stroke={B} /><path d="M16 1C16 5 10 6 10 9S3 14 3 20" stroke="#fff" strokeWidth="2.500" /><path d="M3.500 12C0 6 -1 6 0 1H7C8 5 7 6 3.500 12Z" fill="#e07000" /><circle cx="3.500" cy="4" r="1.500" fill="#fff" /><circle cx="17.500" cy="18" r="3" fill="#e07000" /><circle cx="20" cy="12" r="1.800" fill="#e07000" /></>,
  <path d="M7 1H14L20.500 10.500L14 20H7L.5 10.500ZM7 1L14 10.500L7 20M14 1L7 10.500L14 20M3.500 5.500L10.500 15M17.500 5.500L10.500 15" fill="#fff" stroke="#96379c" strokeWidth="1.100" />,

  <path d="M1 2H14L20.500 10.500L14 19H1L7.500 10.500ZM1 7L5 2M8 11L14 3M1 19L10 10M6 19L17 6M11 19L19 9" fill="#fff" stroke="#2a8dd4" strokeWidth="1.300" />,
  <path d="M2 8H4V10H2ZM10 8H12V10H10ZM18 8H20V10H18Z" fill={DARK} />,
];

function Dropbox({ children, cls }: { children: React.ReactNode; cls: string }) {
  return (
    <div className={`${cls} flex w-[212px] items-center rounded-[2px] border border-dashed border-[#c8c6c4] bg-white text-[14.300px] whitespace-nowrap text-[#252423]`}>{children}</div>
  );
}

function Visualizations() {
  return (
    <div className="w-[227px] shrink-0 border-r border-l border-[#dddbd9] bg-[#f3f2f1] text-[14.300px] text-[#3b3a39]">
      <div className="flex h-[63px] items-center justify-between pt-[3px] pr-[15px] pl-[15px]">
        <span className="text-[19px] font-semibold tracking-[-0.200px] text-[#484644]">Visualizations</span>
        <svg width="9" height="16" viewBox="0 0 9 16" fill="none" className="-mt-[6px]">
          <path d="M1 1L8 8L1 15" stroke="#484644" strokeWidth="1.300" />
        </svg>
      </div>
      <div className="grid grid-cols-[repeat(6,21px)] gap-x-[14px] gap-y-[9px] pt-[3px] pl-[7px]">
        {VIZ.map((v, i) => (
          <svg key={i} width="21" height="21" viewBox="0 0 21 21" fill="none" strokeWidth="1.300" className="overflow-visible">
            {v}
          </svg>
        ))}
      </div>
      <div className="mt-[4px] border-t border-[#dddbd9] pt-[9px]">
        <svg width="140" height="38" viewBox="0 0 140 38" fill="none" stroke={DARK} strokeWidth="1.400" className="block">
          <path d="M27 2.500H47" />
          <path d="M27.500 6.500H52V14H27.500ZM27.500 17.500H52V25.500H27.500Z" strokeDasharray="2.500 1.200" />
          <path d="M78.500 2.500H96V7.500H78.500ZM96 4H100.500V11H88.500V14.500M86.500 14.500H91V26H86.500Z" />
          <rect x="15" y="32" width="50" height="5" rx="2.500" fill="#f2c811" stroke="none" />
        </svg>
        <div className="mt-[6px] pl-[15px] leading-[20px] tracking-[-0.100px]">Values</div>
        <Dropbox cls="mt-[7px] ml-[5px] h-[35px] pl-[13px]">Add data fields here</Dropbox>
        <div className="mt-[18px] pl-[17px] text-[19px] leading-[24px] font-semibold text-[#484644]">Drill through</div>
        <div className="mt-[19px] pl-[11px] leading-[20px] tracking-[-0.050px]">Cross-report</div>
        <div className="mt-[16px] flex items-center gap-[5px] pl-[23px] leading-[20px] tracking-[-0.100px]">
          Off
          <svg width="38" height="16" viewBox="0 0 38 16" fill="none" stroke="#605e5c">
            <rect x="14" y="7" width="23" height="2" fill="#fff" rx="1" />
            <circle cx="8" cy="8" r="6.700" strokeWidth="1.700" />
          </svg>
        </div>
        <div className="mt-[24px] pl-[11px] leading-[20px] tracking-[-0.050px]">Keep all filters</div>
        <div className="mt-[16px] flex items-center gap-[4px] pl-[23px] leading-[20px] tracking-[-0.100px]">
          On
          <svg width="38" height="16" viewBox="0 0 38 16" fill="none" stroke="#605e5c">
            <rect x="1" y="7" width="23" height="2" fill="#fff" rx="1" />
            <circle cx="30.500" cy="8" r="7" fill="#605e5c" />
          </svg>
        </div>
        <Dropbox cls="mt-[17px] ml-[5px] h-[32px] pl-[10px]">Add drill-through fields here</Dropbox>
      </div>
    </div>
  );
}

function Chevron() {
  return (
    <svg width="9" height="16" viewBox="0 0 9 16" fill="none">
      <path d="M8 1L1 8L8 15" stroke="#484644" strokeWidth="1.300" />
    </svg>
  );
}

/* ---------- windows taskbar ---------- */

const TASKS: { w: string; run?: string; active?: boolean; svg: React.ReactNode }[] = [
  {
    w: "w-[61px]",
    svg: <g stroke="#fff" strokeWidth="1.500" fill="none"><path d="M6 6V10H18V6M6 26V22H18V26M6 13H18V19H6ZM23 6V26" /><path d="M23 11V14" strokeWidth="4" /></g>,
  },
  {
    w: "w-[65px]",
    svg: (
      <>
        <path d="M1 18C1 7 9 1 17 1C26 1 31 7 31 13C31 18 27 20 23 20C20 20 19 18.500 20 17C21 14 18 10 13 10C7 10 2 14 1 18Z" fill="#36c6d8" />
        <path d="M20 1.300C27 3 31 8 31 13C31 18 27 20 23 20C20 20 19 18.500 20 17C22 11 18 5 20 1.300Z" fill="#57d479" />
        <path d="M1 18C2 13 7 10 13 10C17 10 20 13 20 16C14 15 11 20 13 25C15 29 20 31 24 29C16 34 1 31 1 18Z" fill="#1683d8" />
        <path d="M13 18C10 25 17 30 28 26C25 30 20 32 15 31C8 29 8 20 13 18Z" fill="#114f9e" />
      </>
    ),
  },
  {
    w: "w-[60px]",
    run: "w-[51px]",
    svg: (
      <>
        <path d="M2 4H12L15 7H30V28H2Z" fill="#dd9a17" />
        <path d="M2 8H14L16 6H30V28H2Z" fill="#fdd050" />
        <path d="M7 28V17H25V28H20V23H12V28Z" fill="#3d95dd" />
      </>
    ),
  },
  {
    w: "w-[62px]",
    svg: (
      <>
        <path d="M20 1L9 13L8.500 17L17 20.500L11 31L23 20.500L24 16L15.500 12.500Z" fill="#2b8ff3" />
        <path d="M20 1L9 13L16 16L15.500 12.500Z" fill="#7fdcfb" />
        <path d="M15.500 12.500L24 16L23 20.500L17 20.500Z" fill="#4fb6f7" />
      </>
    ),
  },
  {
    w: "w-[62px]",
    run: "w-[51px]",
    svg: (
      <>
        <path d="M3 18C3 10 10 5 17 6C25 7 29 13 28 19C27 22 23 20 21 22C20 25 22 28 16 28C8 28 3 24 3 18Z" fill="#cfe4ef" />
        <circle cx="9" cy="15" r="2.700" fill="#e5533c" />
        <circle cx="15" cy="10.500" r="2.500" fill="#f5b92e" />
        <circle cx="20" cy="13" r="2.500" fill="#4cae4f" />
        <circle cx="8.500" cy="21" r="2.700" fill="#58b947" />
        <circle cx="14" cy="24" r="2.500" fill="#3d7fdd" />
        <path d="M24 7L28 1L31 3L28 9L20 29L17 31Z" fill="#c98a4d" />
      </>
    ),
  },
  {
    w: "w-[62px]",
    svg: (
      <>
        <ellipse cx="16" cy="10" rx="12" ry="8" transform="rotate(-25 16 10)" fill="#f0f0f0" stroke="#d83b3b" strokeWidth="2" />
        <path d="M4 16L16 20L12 22L5 20Z" fill="#b5b5b5" />
        <path d="M16 18L24 3M16 18L10 6" stroke="#999" strokeWidth="1.500" />
        <ellipse cx="17" cy="26" rx="3" ry="4.500" fill="none" stroke="#2a86d8" strokeWidth="2.400" />
        <ellipse cx="25" cy="21" rx="4.500" ry="3" fill="none" stroke="#2a86d8" strokeWidth="2.400" />
      </>
    ),
  },
  {
    w: "w-[62px]",
    run: "w-[51px]",
    svg: (
      <>
        <circle cx="16" cy="16" r="14" fill="#fcc934" />
        <path d="M16 16L3.900 9A14 14 0 0 1 28.100 9H16Z" fill="#ea4335" />
        <path d="M3.900 9A14 14 0 0 0 14 29.900L20 19.500H12Z" fill="#34a853" />
        <circle cx="16" cy="16" r="6.500" fill="#fff" />
        <circle cx="16" cy="16" r="5.200" fill="#4285f4" />
      </>
    ),
  },
  {
    w: "w-[62px]",
    run: "w-[51px]",
    svg: (
      <>
        <path d="M10 4H26L21 26H3Z" fill="#b5dfe8" />
        <path d="M10 4H18L10 26H3Z" fill="#7cc3cf" />
        <path d="M26 4L29 24L26 28L21 26Z" fill="#d8d2b6" />
        <path d="M10 3H26" stroke="#e8e8e8" strokeWidth="2" />
        <path d="M3 26L22 27.500" stroke="#3f7f8a" strokeWidth="2" />
      </>
    ),
  },
  {
    w: "w-[62px]",
    svg: <g fill="none" stroke="#fff" strokeWidth="1.700"><path d="M12 28L5 24V13L24 4V13" /><path d="M12 18L27 12V17L12 23Z" fill="#fff" stroke="none" /><path d="M18.500 18V29L25.500 25V17Z" fill="#fff" stroke="#262a32" strokeWidth="1" /></g>,
  },
  {
    w: "w-[62px]",
    svg: (
      <>
        <rect x="1" y="1" width="30" height="30" fill="#0a94dc" />
        <g fill="none" stroke="#fff" strokeWidth="1.200">
          <path d="M11 12V8H20V12M19 21H9V12H22V15M11.500 17H17" />
          <rect x="19.500" y="15.500" width="4.500" height="8" />
        </g>
      </>
    ),
  },
  {
    w: "w-[63px]",
    svg: (
      <>
        <path d="M23 1L31 5V27L23 31Z" fill="#2aa4f0" />
        <path d="M23 1V9L4 24L1 21.500V20L23 1Z" fill="#1b8ad4" />
        <path d="M23 31V23L4 8L1 10.500V12L23 31Z" fill="#0f6fb8" />
      </>
    ),
  },
  {
    w: "w-[61px]",
    run: "w-[61px]",
    active: true,
    svg: (
      <>
        <rect x="17" y="1" width="10" height="30" fill="#e0a012" />
        <rect x="11" y="8" width="10" height="23" fill="#f5c93f" />
        <rect x="5" y="16" width="10" height="15" fill="#fbe07e" />
      </>
    ),
  },
  {
    w: "w-[63px]",
    run: "w-[51px]",
    svg: (
      <>
        <rect x="8" y="2" width="23" height="28" rx="2" fill="#2b7cd3" />
        <rect x="8" y="2" width="23" height="7" fill="#41a5ee" />
        <rect x="8" y="22" width="23" height="8" fill="#103f91" />
        <rect x="1" y="8" width="16" height="16" rx="1.500" fill="#185abd" />
        <text x="9" y="20.500" fontSize="12" fontWeight="700" textAnchor="middle" fill="#fff">W</text>
      </>
    ),
  },
  {
    w: "w-[61px]",
    run: "w-[51px]",
    svg: (
      <>
        <rect x="8" y="2" width="23" height="28" rx="2" fill="#21a366" />
        <rect x="8" y="2" width="11.500" height="14" fill="#107c41" />
        <rect x="8" y="16" width="23" height="14" fill="#185c37" />
        <rect x="19.500" y="2" width="11.500" height="7" fill="#33c481" />
        <rect x="1" y="8" width="16" height="16" rx="1.500" fill="#107c41" />
        <text x="9" y="20.500" fontSize="12" fontWeight="700" textAnchor="middle" fill="#fff">X</text>
      </>
    ),
  },
];

function Taskbar() {
  return (
    <div className="flex h-[50px] bg-linear-to-r from-[#22333a] via-[#262c35] to-[#211f24] text-white">
      <div className="flex w-[60px] shrink-0 items-center justify-center">
        <svg width="20" height="20" viewBox="0 0 20 20" fill="#fff">
          <path d="M0 3L8.500 1.700V9.500H0ZM9.500 1.500L20 0V9.500H9.500ZM0 10.500H8.500V18.300L0 17ZM9.500 10.500H20V20L9.500 18.500Z" />
        </svg>
      </div>
      <div className="flex w-[430px] shrink-0 items-center gap-[15px] border border-[#c3c3c3] bg-[#f2f2f2] pl-[13px] text-[17.800px] text-[#3b3a39]">
        <svg width="21" height="22" viewBox="0 0 21 22" fill="none" stroke="#222" strokeWidth="1.500">
          <circle cx="13" cy="8" r="6.700" />
          <path d="M8.500 13L1 20.500" />
        </svg>
        Type here to search
      </div>
      <div className="flex bg-linear-to-r from-[#414343] via-[#2f353b] to-[#25272e]">
        {TASKS.map((t, i) => (
          <div key={i} className={`${t.w} flex shrink-0 flex-col items-center justify-between pt-[9px] ${t.active ? "bg-[#55565c]" : ""}`}>
            <svg width="32" height="32" viewBox="0 0 32 32">
              {t.svg}
            </svg>
            {t.run && <div className={`${t.run} h-[3px] bg-[#76b9ed]`} />}
          </div>
        ))}
      </div>
      <div className="flex grow items-center justify-end">
        <svg width="30" height="30" viewBox="0 0 30 30">
          <circle cx="14" cy="14" r="12.500" fill="#1590dc" stroke="#fff" strokeWidth="2" />
          <text x="13.500" y="21" fontSize="19" fontWeight="700" textAnchor="middle" fill="#fff">?</text>
          <circle cx="24" cy="22" r="6" fill="#f0a020" />
          <path d="M24 21V26M24 18V19.500" stroke="#fff" strokeWidth="1.800" />
        </svg>
        <svg width="27" height="26" viewBox="0 0 27 26" className="ml-[34px]">
          <circle cx="12" cy="13" r="11.500" fill="#fdb92c" />
          <path d="M12 1.500A11.500 11.500 0 0 0 1 16C5 8 12 8 20 5Z" fill="#fdd460" />
          <path d="M12 22A5 5 0 0 1 13 13A6 6 0 0 1 24 14A4.500 4.500 0 0 1 23 22Z" fill="#cfe6f8" />
        </svg>
        <span className="ml-[11px] w-[57px] text-[17.200px] tracking-[-0.100px]">28°C</span>
        <svg width="150" height="30" viewBox="0 0 150 30" fill="none" stroke="#fff" strokeWidth="1.400">
          <path d="M2 18L10 10L18 18" />
          <rect x="35" y="9" width="8" height="12" rx="2" />
          <path d="M43 13L47 11V19L43 17M35 6Q39 4 44 6M35 24Q39 26 44 24" />
          <path d="M65 10H80V20H65ZM80 13H82V17H80M61 7V11H66V7M63.500 11V16H65" />
          <rect x="66" y="12" width="12" height="6" fill="#fff" />
          <g stroke="#cfcfcf">
            <path d="M94 21A14 14 0 0 1 108 8M97.500 22A10.500 10.500 0 0 1 108 12M101 22.500A7 7 0 0 1 108 16" />
            <circle cx="106" cy="21" r="1.500" fill="#fff" />
          </g>
          <path d="M121 12H124L128 8V22L124 18H121Z" />
          <path d="M131 12Q133 15 131 18M134 10Q137.500 15 134 20" />
          <path d="M137 8Q142 15 137 22" stroke="#999" />
        </svg>
        <span className="ml-[3px] w-[40px] text-[14.500px] tracking-[-0.200px]">ENG</span>
        <div className="w-[76px] text-center text-[14.500px] leading-[23px] tracking-[-0.200px]">
          <div>6:51 PM</div>
          <div>10/10/2021</div>
        </div>
        <svg width="23" height="22" viewBox="0 0 23 22" className="ml-[19px]">
          <path d="M1 1H20V17H10L6 21V17H1Z" fill="#fff" />
          <path d="M4 5H17M4 9H17M4 13H11" stroke="#2a292e" strokeWidth="1.500" />
          <path d="M17 10A5 5 0 1 0 22 17A5 5 0 0 1 17 10Z" fill="#fff" stroke="#211f24" strokeWidth="1" />
        </svg>
        <div className="mr-[4px] ml-[24px] h-[50px] w-px bg-[#77767a]" />
      </div>
    </div>
  );
}

export default function App() {
  return (
    <div className="flex h-[1080px] w-[1920px] flex-col overflow-hidden bg-[#f3f2f1] font-['Open_Sans','Noto_Sans',sans-serif]">
      <TitleBar />
      <Ribbon />
      <div className="flex h-[800px]">
        <Rail />
        <div className="w-[1602px] shrink-0">
          <div className="flex h-[755px] bg-white">
            <div className="w-[1560px] overflow-hidden pt-[2px] pl-[114px]">
              <Report />
            </div>
            <div className="flex w-[42px] flex-col items-center border-l border-[#c8c6c4] text-[#252423]">
              <div className="mt-[21px] ml-px">
                <Chevron />
              </div>
              <svg width="14" height="16" viewBox="0 0 14 16" fill="none" className="mt-[43px] ml-[6px]">
                <path d="M13 1V15L6 9.500H.8V6.500H6Z" stroke="#605e5c" />
              </svg>
              <div className="mt-[15px] text-[18.500px] leading-[20px] font-semibold tracking-[-0.050px] [writing-mode:vertical-rl]">Filters</div>
            </div>
          </div>
          <PageTabs />
        </div>
        <Visualizations />
        <div className="flex w-[40px] flex-col items-center">
          <div className="mt-[21px]">
            <Chevron />
          </div>
          <div className="mt-[42px] mr-[4px] text-[18.500px] leading-[20px] font-semibold tracking-[0.100px] text-[#3b3a39] [writing-mode:vertical-rl]">Fields</div>
        </div>
      </div>
      <div className="flex h-[29px] items-center border-t border-[#d8d6d4] pb-px pl-[6px] text-[14.500px] tracking-[-0.100px] text-[#484644]">Page 5 of 10</div>
      <Taskbar />
    </div>
  );
}
